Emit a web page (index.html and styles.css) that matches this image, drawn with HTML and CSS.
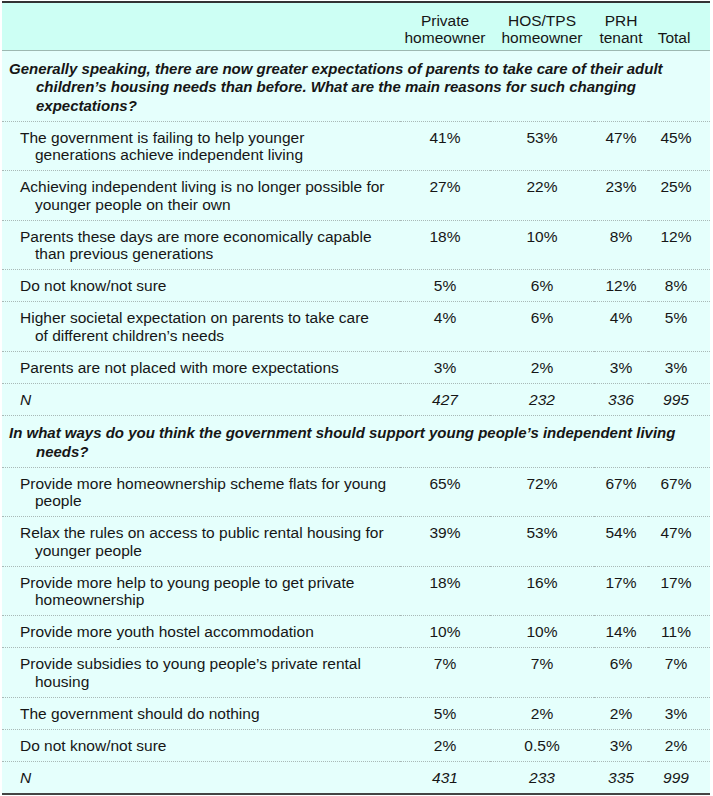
FILE: index.html
```html
<!DOCTYPE html>
<html lang="en">
<head>
<meta charset="utf-8">
<title>Survey table</title>
<link rel="stylesheet" href="styles.css">
</head>
<body>
<table class="data">
  <colgroup>
    <col class="c-label">
    <col class="c-1">
    <col class="c-2">
    <col class="c-3">
    <col class="c-4">
  </colgroup>
  <thead>
    <tr>
      <th class="label"></th>
      <th>Private<br>homeowner</th>
      <th>HOS/TPS<br>homeowner</th>
      <th>PRH<br>tenant</th>
      <th class="total">Total</th>
    </tr>
  </thead>
  <tbody>
    <tr class="section">
      <td colspan="5">Generally speaking, there are now greater expectations of parents to take care of their adult<br>children’s housing needs than before. What are the main reasons for such changing<br>expectations?</td>
    </tr>
    <tr><td class="label">The government is failing to help younger<br>generations achieve independent living</td><td>41%</td><td>53%</td><td>47%</td><td>45%</td></tr>
    <tr><td class="label">Achieving independent living is no longer possible for<br>younger people on their own</td><td>27%</td><td>22%</td><td>23%</td><td>25%</td></tr>
    <tr><td class="label">Parents these days are more economically capable<br>than previous generations</td><td>18%</td><td>10%</td><td>8%</td><td>12%</td></tr>
    <tr><td class="label">Do not know/not sure</td><td>5%</td><td>6%</td><td>12%</td><td>8%</td></tr>
    <tr><td class="label">Higher societal expectation on parents to take care<br>of different children’s needs</td><td>4%</td><td>6%</td><td>4%</td><td>5%</td></tr>
    <tr><td class="label">Parents are not placed with more expectations</td><td>3%</td><td>2%</td><td>3%</td><td>3%</td></tr>
    <tr class="n"><td class="label">N</td><td>427</td><td>232</td><td>336</td><td>995</td></tr>
    <tr class="section">
      <td colspan="5">In what ways do you think the government should support young people’s independent living<br>needs?</td>
    </tr>
    <tr><td class="label">Provide more homeownership scheme flats for young<br>people</td><td>65%</td><td>72%</td><td>67%</td><td>67%</td></tr>
    <tr><td class="label">Relax the rules on access to public rental housing for<br>younger people</td><td>39%</td><td>53%</td><td>54%</td><td>47%</td></tr>
    <tr><td class="label">Provide more help to young people to get private<br>homeownership</td><td>18%</td><td>16%</td><td>17%</td><td>17%</td></tr>
    <tr><td class="label">Provide more youth hostel accommodation</td><td>10%</td><td>10%</td><td>14%</td><td>11%</td></tr>
    <tr><td class="label">Provide subsidies to young people’s private rental<br>housing</td><td>7%</td><td>7%</td><td>6%</td><td>7%</td></tr>
    <tr><td class="label">The government should do nothing</td><td>5%</td><td>2%</td><td>2%</td><td>3%</td></tr>
    <tr><td class="label">Do not know/not sure</td><td>2%</td><td>0.5%</td><td>3%</td><td>2%</td></tr>
    <tr class="n last"><td class="label">N</td><td>431</td><td>233</td><td>335</td><td>999</td></tr>
  </tbody>
</table>
</body>
</html>
```

FILE: styles.css
```css
html, body {
  margin: 0;
  padding: 0;
  background: #ffffff;
}

body {
  font-family: "Liberation Sans", Arial, sans-serif;
  font-size: 15.5px;
  line-height: 17.5px;
  color: #161616;
}

.data {
  margin: 1px 0 0 2px;
  width: 708px;
  border-collapse: collapse;
  table-layout: fixed;
  border-top: 2px solid #333333;
  border-bottom: 2px solid #444444;
}

.c-label { width: 398px; }
.c-1 { width: 90px; }
.c-2 { width: 104px; }
.c-3 { width: 54px; }
.c-4 { width: 62px; }

.data thead tr {
  background: #cdfff4;
}

.data th {
  font-weight: normal;
  text-align: center;
  vertical-align: bottom;
  padding: 9px 2px 4px;
  line-height: 17px;
  white-space: nowrap;
  border-bottom: 1px solid #9db8b1;
}

.data th.total {
  padding-right: 12px;
}

.data tbody tr {
  background: #e5fffc;
}

.data td {
  text-align: center;
  vertical-align: top;
  padding: 7px 2px 6.5px;
  white-space: nowrap;
  border-bottom: 1px dotted #a9b9b7;
}

.data td:last-child {
  padding-right: 8px;
}

.data td.label {
  text-align: left;
  padding-left: 33px;
  text-indent: -15px;
}

.data tr.section td {
  text-align: left;
  font-size: 15px;
  line-height: 18.5px;
  font-weight: bold;
  font-style: italic;
  padding: 8.5px 4px 5.5px 34px;
  text-indent: -27px;
}

.data tr.n td {
  font-style: italic;
}

.data tr.last td {
  border-bottom: none;
}
```
